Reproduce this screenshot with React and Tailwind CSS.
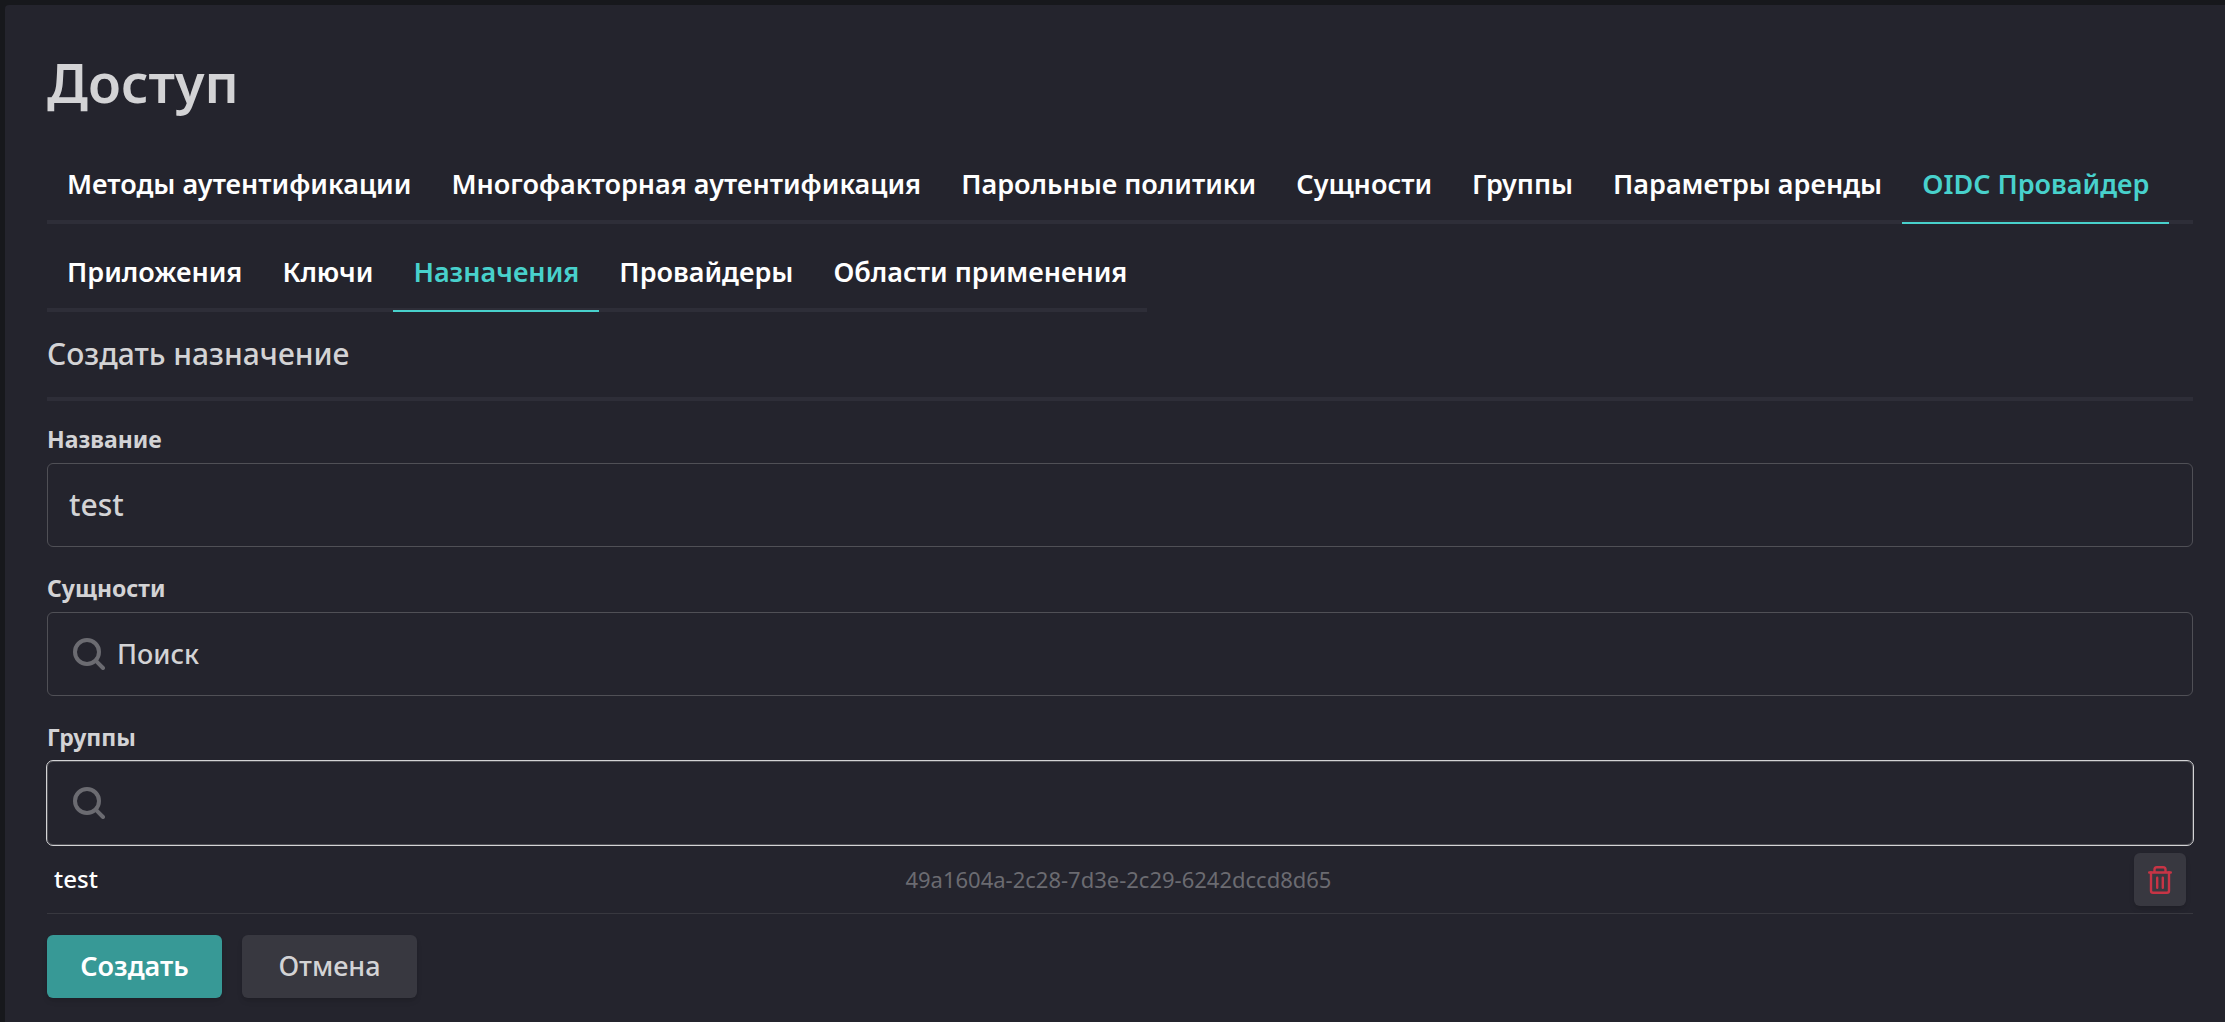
import React from 'react';

const sections = [
  'Методы аутентификации',
  'Многофакторная аутентификация',
  'Парольные политики',
  'Сущности',
  'Группы',
  'Параметры аренды',
  'OIDC Провайдер',
];

const oidcSections = ['Приложения', 'Ключи', 'Назначения', 'Провайдеры', 'Области применения'];

const SearchIcon = ({ className }) => <svg className={className} viewBox="0 0 32 32" fill="none" stroke="currentColor" strokeWidth="4" strokeLinecap="round" aria-hidden="true">
    <circle cx="14" cy="14" r="12" />
    <path d="M22.7 22.7 30 30" />
  </svg>;

const TrashIcon = ({ className }) => <svg className={className} viewBox="0 0 24 28" fill="none" stroke="currentColor" strokeWidth="2.4" strokeLinejoin="round" strokeLinecap="round" aria-hidden="true">
    <path d="M1.200 6.500h21.600M6.500 6V3.500A2.300 2.300 0 0 1 8.800 1.200h6.400a2.300 2.300 0 0 1 2.300 2.300V6" />
    <path d="M3 6.500v18.200a2 2 0 0 0 2 2h14a2 2 0 0 0 2-2V6.500" />
    <path d="M9.200 11.800v9.900M14.800 11.800v9.900" />
  </svg>;

function Tabs({ items, active, label, className = '' }) {
  return <nav aria-label={label} className={`flex border-b-4 border-[#2e2e38] ${className}`}>
      {items.map(item => <a
          key={item}
          href="#"
          aria-current={item === active ? 'page' : undefined}
          className={`-mb-1 border-b-2 px-5 pt-5 pb-[18px] text-[27px] leading-10 font-semibold whitespace-nowrap ${item === active ? 'border-[#48d1cc] text-[#48d1cc]' : 'border-transparent text-white'}`}
        >
          {item}
        </a>)}
    </nav>;
}

function Field({ id, label, children }) {
  return <div>
      <label htmlFor={id} className="mb-2 block w-fit text-[23px] leading-8 font-bold">{label}</label>
      {children}
    </div>;
}

// Text box with a magnifier in front of the value
function SearchInput({ id, placeholder, focused = false }) {
  return <div className={`flex h-[84px] items-center gap-3 rounded-md border border-[#505056] px-[25px] ${focused ? 'outline outline-[#d3d3d5]' : ''}`}>
      <SearchIcon className="size-8 shrink-0 text-[#6b6b71]" />
      <input id={id} type="text" placeholder={placeholder} className="w-full bg-transparent text-[27px] font-medium outline-none placeholder:text-[#d3d3d5] placeholder:opacity-100" />
    </div>;
}

export default function App() {
  const [name, setName] = React.useState('test');
  const [groups, setGroups] = React.useState([
    { name: 'test', id: '49a1604a-2c28-7d3e-2c29-6242dccd8d65' },
  ]);

  return <div className="min-h-screen bg-[#17181c] pt-[5px] pl-[5px] font-['Noto_Sans',sans-serif]">
      <main className="min-h-[calc(100vh-5px)] rounded-tl-sm bg-[#24242d] pt-[45px] pr-8 pb-6 pl-[42px] text-[#d3d3d5]">
        <h1 className="text-[54px] leading-16 font-semibold">Доступ</h1>

        <Tabs items={sections} active="OIDC Провайдер" label="Доступ" className="mt-[30px]" />
        <Tabs items={oidcSections} active="Назначения" label="OIDC Провайдер" className="mt-2 w-fit" />

        <form onSubmit={e => e.preventDefault()}>
          <h2 className="mt-[22px] border-b-4 border-[#2e2e38] pb-[23px] text-[30px] leading-10 font-medium">Создать назначение</h2>

          <div className="mt-[22px] flex flex-col gap-[25px]">
            <Field id="name" label="Название">
              <input
                id="name"
                type="text"
                value={name}
                onChange={e => setName(e.target.value)}
                className="block h-[84px] w-full rounded-md border border-[#505056] bg-transparent px-[21px] pb-0.5 text-[30px] font-medium outline-none"
              />
            </Field>
            <Field id="entities" label="Сущности">
              <SearchInput id="entities" placeholder="Поиск" />
            </Field>
            <Field id="groups" label="Группы">
              <SearchInput id="groups" focused />
            </Field>
          </div>

          <table className="w-full border-collapse">
            <tbody>
              {groups.map(group => <tr key={group.id} className="border-b border-[#38383f]">
                  <td className="w-2/5 pl-[7px] text-[24px] font-medium text-white">{group.name}</td>
                  <td className="text-[22px] text-[#6b6b71]">{group.id}</td>
                  <td className="pt-2 pr-[7px] pb-[7px]">
                    <button
                      type="button"
                      aria-label="Удалить"
                      onClick={() => setGroups(groups.filter(g => g.id !== group.id))}
                      className="ml-auto flex h-[53px] w-[52px] items-center justify-center rounded-md bg-[#383840] text-[#c73445] shadow-md"
                    >
                      <TrashIcon className="h-7 w-6" />
                    </button>
                  </td>
                </tr>)}
            </tbody>
          </table>

          <div className="mt-[21px] flex gap-5">
            <button type="submit" className="h-[63px] w-[175px] rounded-md bg-[#379996] text-[27px] font-semibold text-white shadow-md">Создать</button>
            <button type="button" className="h-[63px] w-[175px] rounded-md bg-[#383840] text-[27px] font-medium shadow-md">Отмена</button>
          </div>
        </form>
      </main>
    </div>;
}
